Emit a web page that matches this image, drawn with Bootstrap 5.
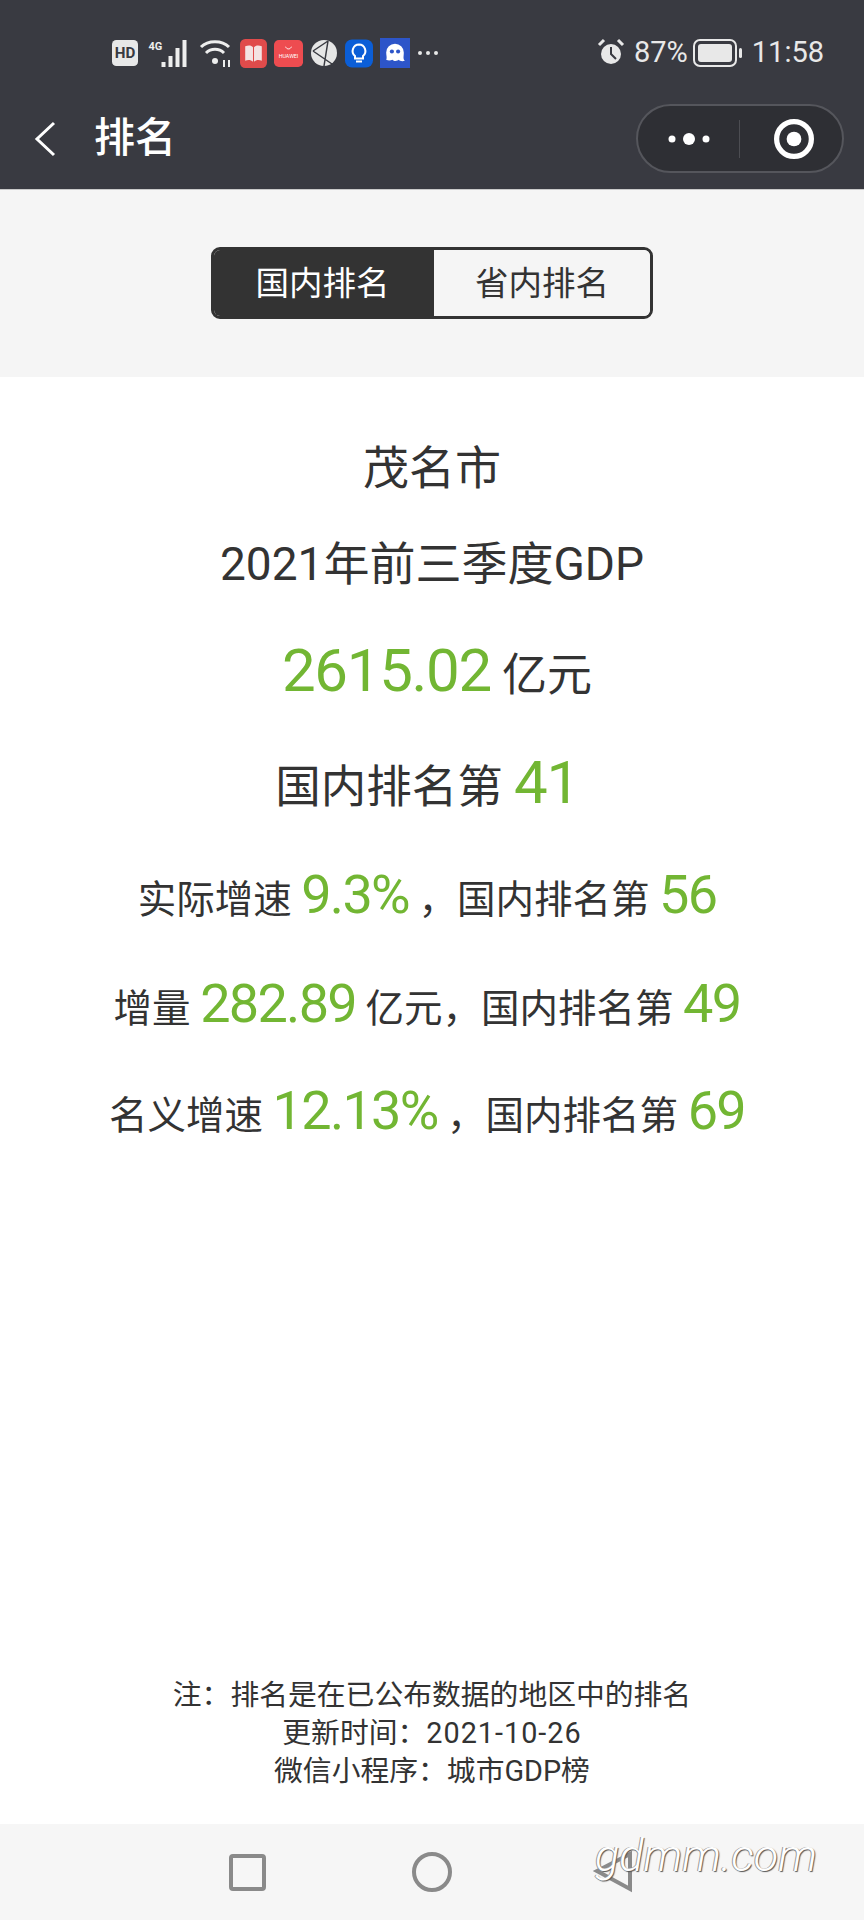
<!DOCTYPE html>
<html lang="zh">
<head>
    <meta charset="UTF-8">
    <meta name="viewport" content="width=device-width, initial-scale=1.0">
    <title>排名</title>
    <link href="https://cdn.jsdelivr.net/npm/bootstrap@5.3.0/dist/css/bootstrap.min.css" rel="stylesheet">
    <style>
        html, body { width: 864px; height: 1920px; overflow: hidden; }
        body { font-family: Roboto, "Noto Sans CJK SC", sans-serif; color: #333; background: #fff; }
        .screen { height: 1920px; position: relative; }
        .head-bar { height: 190px; background: #393a41; color: #fff; border-bottom: 1px solid #c9c9c9; }
        .status-row { height: 96px; padding: 10px 40px 0 112px; }
        .status-left { gap: 7px; }
        .status-right { font-size: 29px; color: #e8e8e8; gap: 5px; }
        .title-row { height: 85px; padding: 0 20px 0 34px; }
        .title-txt { font-size: 41px; margin-left: 38px; line-height: 1; font-weight: 500; }
        .capsule { width: 208px; height: 69px; border: 2px solid #55565c; border-radius: 35px; background: #2e2f34; }
        .capsule-part { width: 104px; }
        .capsule-ring { padding-left: 6px; }
        .capsule-line { width: 1px; height: 38px; background: #4c4d52; }
        .tab-zone { height: 187px; background: #f5f5f5; padding-top: 57px; }
        .seg { width: 442px; height: 72px; border: 3px solid #333; border-radius: 9px; overflow: hidden; }
        .seg-item { font-size: 33.5px; line-height: 1; padding-top: 2px; }
        .seg-on { width: 220px; background: #333; color: #fff; padding-right: 3px; }
        .seg-off { flex: 1; background: #f5f5f5; color: #333; }
        .info { padding-top: 58px; }
        .line-city { font-size: 46px; line-height: 66px; }
        .line-title { font-size: 46px; line-height: 66px; margin-top: 30px; }
        .line-gdp { font-size: 45px; line-height: 84px; margin-top: 32px; padding-left: 10px; }
        .line-rank { font-size: 45.5px; line-height: 76px; margin-top: 27px; padding-right: 10px; }
        .line-sub { font-size: 38.5px; line-height: 70px; margin-top: 34px; padding-right: 10px; }
        .line-sub-end { margin-top: 32px; }
        .num { color: #72b633; }
        .num-xl { font-size: 60px; letter-spacing: -1.3px; }
        .num-lg { font-size: 54px; letter-spacing: -1.7px; }
        .foot-note { font-size: 28.8px; line-height: 38px; color: #333; margin-bottom: 34px; }
        .date-num { letter-spacing: 1px; }
        .nav-bar { height: 96px; background: #f6f6f6; }
        .mark-water { position: absolute; left: 595px; top: 1833px; font-size: 45px; font-style: italic; line-height: 1; color: #fff; text-shadow: 1px 1px 1px #555, -1px 0 0 #999; font-family: Roboto, sans-serif; font-weight: 300; }
    </style>
</head>
<body>
    <div class="screen d-flex flex-column">
        <div class="head-bar">
            <div class="status-row d-flex justify-content-between align-items-center">
                <div class="status-left d-flex align-items-center">
                    <svg width="26" height="26" viewBox="0 0 24 24"><rect width="24" height="24" rx="4" fill="#e8e8e8"/><text x="12" y="17" font-size="14" font-weight="700" text-anchor="middle" fill="#393a41" font-family="Roboto">HD</text></svg>
                    <svg width="47" height="30" viewBox="0 0 44 30"><text x="2" y="12" font-size="11" font-weight="700" fill="#eee" font-family="Roboto">4G</text><g fill="#eee"><rect x="15" y="24" width="4" height="5"/><rect x="22" y="18" width="4" height="11"/><rect x="29" y="10" width="4" height="19"/><rect x="36" y="2" width="4" height="27"/></g></svg>
                    <svg width="34" height="30" viewBox="0 0 34 30" fill="none" stroke="#eee" stroke-width="3"><path d="M2 9C9 2 23 2 30 9"/><path d="M7 15C12 10 20 10 25 15"/><circle cx="16" cy="23" r="3" fill="#eee" stroke="none"/><path d="M25 22v7M30 22v7" stroke-width="2"/></svg>
                    <svg width="27" height="29" viewBox="0 0 26 28"><rect width="26" height="28" rx="5" fill="#e04b4b"/><path d="M5 7c3-1 6-1 7.500 1v14c-2-2-5-2-7.500-1zM21 7c-3-1-6-1-7.500 1v14c2-2 5-2 7.500-1z" fill="#f4e3e3"/></svg>
                    <svg width="29" height="29" viewBox="0 0 30 28"><rect width="30" height="28" rx="5" fill="#ee4c50"/><text x="15" y="19" font-size="5.500" text-anchor="middle" fill="#fff" font-family="Roboto">HUAWEI</text><path d="M12 7c1 3 5 3 6 0" stroke="#fff" fill="none"/></svg>
                    <svg width="28" height="28" viewBox="0 0 28 28"><circle cx="14" cy="14" r="13" fill="#e6e6e6"/><path d="M3 12L18 2M3 12L22 25M18 2L14 27" stroke="#393a41" stroke-width="1.500" fill="none"/></svg>
                    <svg width="28" height="29" viewBox="0 0 28 28"><rect width="28" height="28" rx="7" fill="#0b5ed7"/><path d="M14 5a6.500 6.500 0 0 0-4 11.500V19h8v-2.500A6.500 6.500 0 0 0 14 5zM11 22h6" fill="none" stroke="#fff" stroke-width="2"/></svg>
                    <svg width="30" height="30" viewBox="0 0 29 29"><rect width="29" height="29" fill="#2d55c9"/><path d="M6 14a8.500 8.500 0 0 1 17 0c0 4-1 6 1 8-3 1-5 0-6-1-1 1-4 2-6 0-2 1-4 1-6 0 1-2 0-4 0-7z" fill="#fff"/><circle cx="11.500" cy="13" r="2" fill="#2d55c9"/><circle cx="17.500" cy="13" r="2" fill="#2d55c9"/></svg>
                    <svg width="24" height="8" viewBox="0 0 24 8"><g fill="#e8e8e8"><circle cx="3" cy="4" r="2"/><circle cx="11" cy="4" r="2"/><circle cx="19" cy="4" r="2"/></g></svg>
                </div>
                <div class="status-right d-flex align-items-center">
                    <svg class="me-1" width="28" height="30" viewBox="0 0 28 30"><circle cx="14" cy="16" r="10" fill="#e8e8e8"/><path d="M14 9v7l5 5" stroke="#393a41" stroke-width="2" fill="none"/><path d="M2 7l5-5M26 7l-5-5" stroke="#e8e8e8" stroke-width="3"/></svg>
                    <span>87%</span>
                    <svg width="50" height="30" viewBox="0 0 50 30"><rect x="1" y="2" width="42" height="26" rx="6" fill="none" stroke="#e8e8e8" stroke-width="2"/><rect x="5" y="6" width="34" height="18" rx="3" fill="#e8e8e8"/><rect x="46" y="10" width="3" height="10" rx="1.500" fill="#e8e8e8"/></svg>
                    <span class="ms-1">11:58</span>
                </div>
            </div>
            <div class="title-row d-flex align-items-center justify-content-between">
                <div class="d-flex align-items-center">
                    <svg width="22" height="36" viewBox="0 0 22 36"><path d="M20 2L3 18l17 16" fill="none" stroke="#fff" stroke-width="3"/></svg>
                    <span class="title-txt">排名</span>
                </div>
                <div class="capsule d-flex align-items-center">
                    <div class="capsule-part d-flex justify-content-center">
                        <svg width="42" height="14" viewBox="0 0 42 14"><g fill="#fff"><circle cx="4" cy="7" r="3.500"/><circle cx="21" cy="7" r="6"/><circle cx="38" cy="7" r="3.500"/></g></svg>
                    </div>
                    <div class="capsule-line"></div>
                    <div class="capsule-part capsule-ring d-flex justify-content-center">
                        <svg width="40" height="40" viewBox="0 0 38 38"><circle cx="19" cy="19" r="16.500" fill="none" stroke="#fff" stroke-width="5"/><circle cx="19" cy="19" r="7" fill="#fff"/></svg>
                    </div>
                </div>
            </div>
        </div>

        <div class="tab-zone d-flex justify-content-center">
            <div class="seg d-flex">
                <div class="seg-item seg-on d-flex align-items-center justify-content-center">国内排名</div>
                <div class="seg-item seg-off d-flex align-items-center justify-content-center">省内排名</div>
            </div>
        </div>

        <div class="info text-center">
            <div class="line-city">茂名市</div>
            <div class="line-title">2021年前三季度GDP</div>
            <div class="line-gdp"><span class="num num-xl">2615.02</span> 亿元</div>
            <div class="line-rank">国内排名第 <span class="num num-xl">41</span></div>
            <div class="line-sub">实际增速 <span class="num num-lg">9.3%</span> ，国内排名第 <span class="num num-lg">56</span></div>
            <div class="line-sub">增量 <span class="num num-lg">282.89</span> 亿元，国内排名第 <span class="num num-lg">49</span></div>
            <div class="line-sub line-sub-end">名义增速 <span class="num num-lg">12.13%</span> ，国内排名第 <span class="num num-lg">69</span></div>
        </div>

        <div class="foot-note text-center mt-auto">
            <div>注：排名是在已公布数据的地区中的排名</div>
            <div>更新时间：<span class="date-num">2021-10-26</span></div>
            <div>微信小程序：城市GDP榜</div>
        </div>

        <div class="nav-bar">
            <svg class="d-block" width="864" height="96" viewBox="0 0 864 96" fill="none" stroke="#8a8a8a" stroke-width="4">
                <rect x="231" y="32" width="33" height="33" rx="2"/>
                <circle cx="432" cy="48" r="18"/>
                <path d="M630 30v35l-33-18z"/>
            </svg>
        </div>
        <div class="mark-water">gdmm.com</div>
    </div>
    <script src="https://cdn.jsdelivr.net/npm/bootstrap@5.3.0/dist/js/bootstrap.bundle.min.js"></script>
</body>
</html>
